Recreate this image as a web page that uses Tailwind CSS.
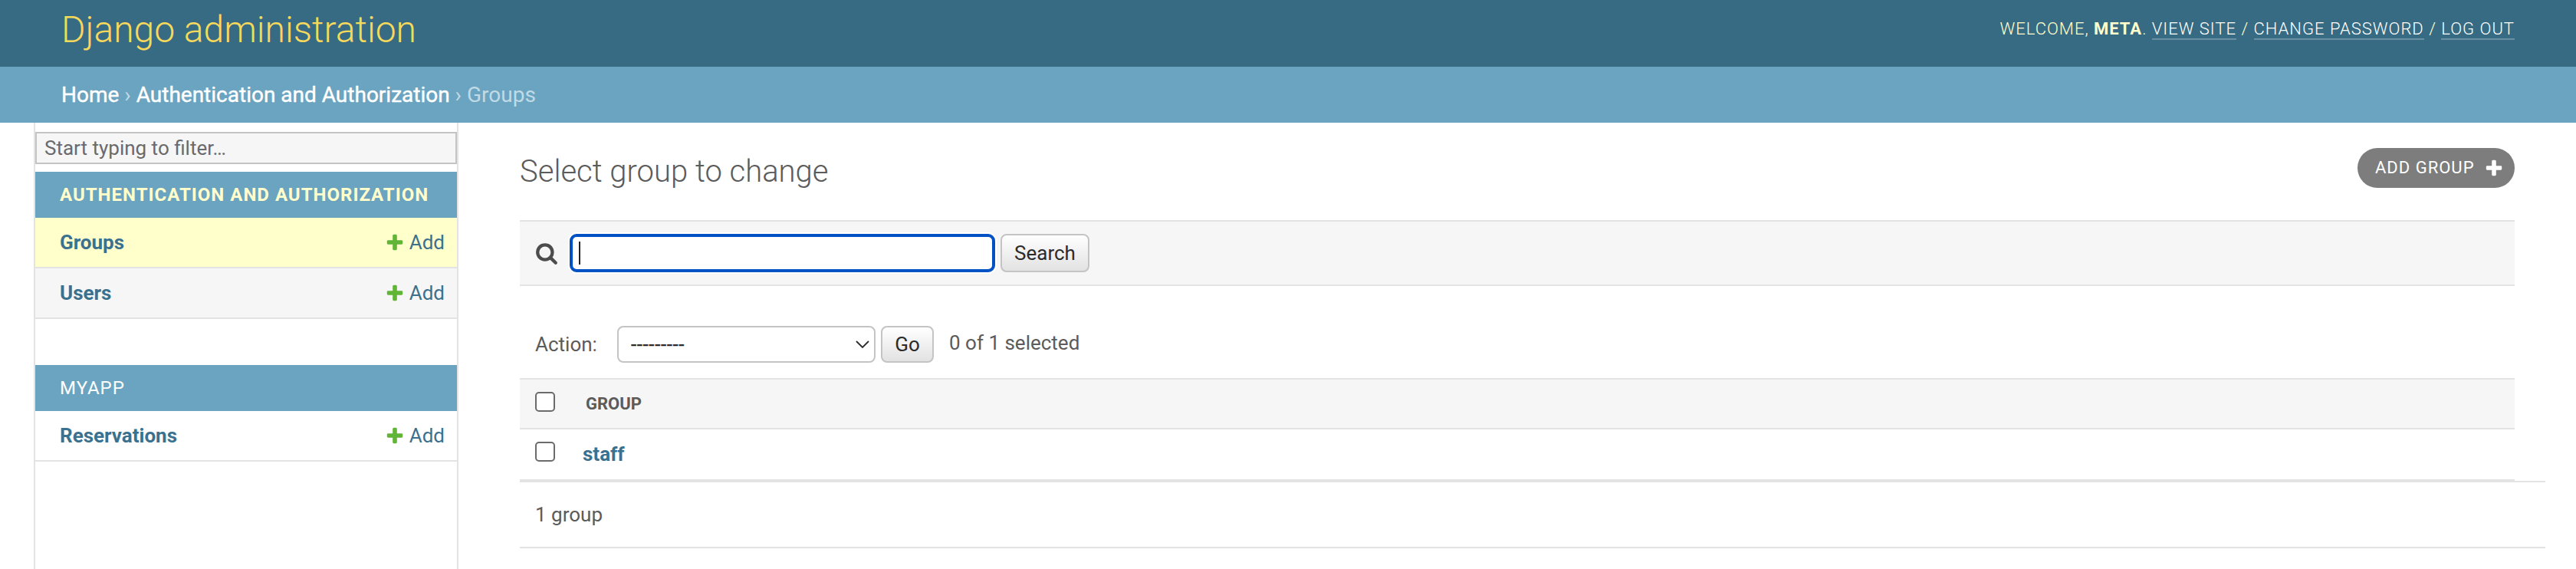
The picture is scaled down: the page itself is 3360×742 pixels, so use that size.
<!DOCTYPE html>
<html lang="en">
<head>
<meta charset="utf-8">
<title>Select group to change | Django site admin</title>
<script src="https://cdn.jsdelivr.net/npm/@tailwindcss/browser@4"></script>
</head>
<body class="h-[742px] overflow-hidden bg-white font-[Roboto,sans-serif] text-[28px] leading-8 text-[#5b5b5b]">
<svg class="hidden">
  <symbol id="plus" viewBox="0 0 1792 1792"><path d="M1600 796v192q0 40-28 68t-68 28h-416v416q0 40-28 68t-68 28h-192q-40 0-68-28t-28-68v-416h-416q-40 0-68-28t-28-68v-192q0-40 28-68t68-28h416v-416q0-40 28-68t68-28h192q40 0 68 28t28 68v416h416q40 0 68 28t28 68z" fill="currentColor"/></symbol>
</svg>
<header class="flex h-[87px] items-start justify-between bg-[#376b83] pl-20 pr-20 text-[#ffc]">
  <h1 class="pt-[11px] text-[48px] font-light leading-[56px] text-[#f6d95c]">Django administration</h1>
  <div class="pt-[23px] text-[22px] font-light uppercase leading-[30px] tracking-[1px]">Welcome, <b class="font-bold">meta</b>. <a class="border-b-2 border-white/25 text-white">View site</a> / <a class="border-b-2 border-white/25 text-white">Change password</a> / <a class="border-b-2 border-white/25 text-white">Log out</a></div>
</header>
<nav class="h-[73px] bg-[#6ba4c0] pl-20 text-[28px] leading-[73px] text-[#c0dae6]"><a class="text-white [-webkit-text-stroke:0.4px_white]">Home</a> › <a class="text-white [-webkit-text-stroke:0.4px_white]">Authentication and Authorization</a> › Groups</nav>
<div class="flex h-[582px]">
  <aside class="ml-11 w-[554px] border-x-2 border-[#e3e3e3] pt-3">
    <div class="flex h-[42px] items-center border-2 border-[#c4c4c4] bg-[#f6f6f6] pl-2.5 text-[26px] text-[#6a6a6a]">Start typing to filter…</div>
    <div class="mt-2.5 flex h-[60px] items-center bg-[#6ba4c0] pl-8 text-[24px] font-bold uppercase tracking-[1px] text-[#ffc]">Authentication and Authorization</div>
    <div class="flex h-[66px] items-center border-b-2 border-[#e3e3e3] bg-[#ffc] pl-8 pr-4 text-[26px] text-[#3a718f]"><b class="flex-1">Groups</b><svg class="mr-1.5 size-[26px] text-[#60b536]"><use href="#plus"/></svg>Add</div>
    <div class="flex h-[66px] items-center border-b-2 border-[#e3e3e3] bg-[#f6f6f6] pl-8 pr-4 text-[26px] text-[#3a718f]"><b class="flex-1">Users</b><svg class="mr-1.5 size-[26px] text-[#60b536]"><use href="#plus"/></svg>Add</div>
    <div class="mt-15 flex h-[60px] items-center bg-[#6ba4c0] pl-8 text-[24px] uppercase tracking-[1px] text-white">Myapp</div>
    <div class="flex h-[66px] items-center border-b-2 border-[#e3e3e3] pl-8 pr-4 text-[26px] text-[#3a718f]"><b class="flex-1">Reservations</b><svg class="mr-1.5 size-[26px] text-[#60b536]"><use href="#plus"/></svg>Add</div>
  </aside>
  <main class="ml-20 flex-1 pr-10">
    <div class="mr-10 flex h-[127px] items-start justify-between">
      <h2 class="pt-10 text-[40px] font-light leading-[48px]">Select group to change</h2>
      <a class="mt-[33px] flex h-[52px] w-[205px] items-center rounded-full bg-[#7d7d7d] pl-[23px] text-[22px] uppercase tracking-[1px] text-white">Add group<svg class="ml-3 size-[26px]"><use href="#plus"/></svg></a>
    </div>
    <form class="mr-10 flex h-[86px] items-center border-y-2 border-[#e3e3e3] bg-[#f6f6f6] pl-5">
      <svg class="h-[30px] w-[30px] text-[#4c4c4c]" viewBox="0 0 1792 1792"><path fill="currentColor" d="M1216 832q0-185-131.500-316.500t-316.500-131.500-316.500 131.500-131.500 316.500 131.500 316.500 316.500 131.500 316.500-131.500 131.500-316.500zm512 832q0 52-38 90t-90 38q-54 0-90-38l-343-342q-179 124-399 124-143 0-273.500-55.500t-225-150-150-225-55.500-273.500 55.500-273.500 150-225 225-150 273.500-55.500 273.500 55.500 225 150 150 225 55.500 273.500q0 220-124 399l343 343q37 37 37 90z"/></svg>
      <div class="ml-[15px] flex h-[50px] w-[555px] items-center rounded-[9px] border-4 border-[#0052c4] bg-white pl-2 ring-2 ring-white"><span class="h-[30px] w-0.5 bg-[#222]"></span></div>
      <button type="button" class="ml-[7px] h-[50px] w-[116px] rounded-lg border-2 border-[#c4c4c4] bg-linear-to-b from-white to-[#e2e2e2] text-[26px] text-[#2b2b2b]">Search</button>
    </form>
    <div class="mt-[52px] flex h-12 items-center pl-5 text-[26px]">
      <span class="w-[107px]">Action:</span>
      <div class="flex h-12 w-[337px] items-center justify-between rounded-lg border-2 border-[#c4c4c4] bg-white pl-4 pr-[6px] text-[#2b2b2b]"><span class="tracking-[0.6px] [-webkit-text-stroke:0.3px_#2b2b2b]">---------</span><svg class="h-[11px] w-[18px]" viewBox="0 0 18 11" fill="none" stroke="currentColor" stroke-width="1.8"><path d="M1 1l8 8 8-8"/></svg></div>
      <button type="button" class="ml-[7px] h-12 w-[69px] rounded-lg border-2 border-[#c4c4c4] bg-linear-to-b from-white to-[#e2e2e2] text-[26px] text-[#2b2b2b]">Go</button>
      <span class="ml-5 pb-1">0 of 1 selected</span>
    </div>
    <div class="mr-10 mt-5 flex h-[67px] items-center border-y-2 border-[#e3e3e3] bg-[#f6f6f6] pl-5"><span class="mb-[5px] h-[26px] w-[26px] rounded-[5px] border-2 border-[#6b6b6b] bg-white"></span><b class="ml-10 text-[22px]">GROUP</b></div>
    <div class="mr-10 flex h-[67px] items-center border-b-2 border-[#e3e3e3] pl-5"><span class="mb-[7px] h-[26px] w-[26px] rounded-[5px] border-2 border-[#6b6b6b] bg-white"></span><b class="mb-0.5 ml-9 text-[26px] text-[#3a718f]">staff</b></div>
    <div class="flex h-[88px] items-center border-y-2 border-[#e3e3e3] pl-5 text-[26px]">1 group</div>
  </main>
</div>
</body>
</html>
